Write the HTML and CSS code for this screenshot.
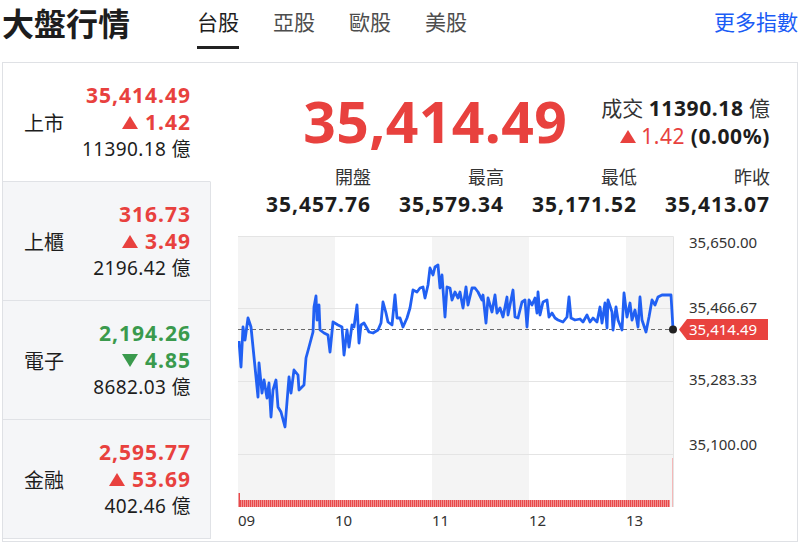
FILE: index.html
```html
<!DOCTYPE html>
<html lang="zh-Hant">
<head>
  <meta charset="UTF-8" />
  <meta name="viewport" content="width=device-width, initial-scale=1" />
  <title>大盤行情</title>
  <link rel="stylesheet" href="styles.css">
</head>
<body>
  <header class="top">
    <h1 class="title">大盤行情</h1>
    <nav class="tabs">
      <a class="tab active" href="#">台股</a>
      <a class="tab" href="#">亞股</a>
      <a class="tab" href="#">歐股</a>
      <a class="tab" href="#">美股</a>
    </nav>
    <a class="more" href="#">更多指數</a>
  </header>

  <section class="card">
    <ul class="markets">
      <li class="market active">
        <span class="name">上市</span>
        <div class="figs">
          <div class="price up">35,414.49</div>
          <div class="chg up"><i class="tri"></i>1.42</div>
          <div class="vol">11390.18 億</div>
        </div>
      </li>
      <li class="market">
        <span class="name">上櫃</span>
        <div class="figs">
          <div class="price up">316.73</div>
          <div class="chg up"><i class="tri"></i>3.49</div>
          <div class="vol">2196.42 億</div>
        </div>
      </li>
      <li class="market">
        <span class="name">電子</span>
        <div class="figs">
          <div class="price down">2,194.26</div>
          <div class="chg down"><i class="tri"></i>4.85</div>
          <div class="vol">8682.03 億</div>
        </div>
      </li>
      <li class="market">
        <span class="name">金融</span>
        <div class="figs">
          <div class="price up">2,595.77</div>
          <div class="chg up"><i class="tri"></i>53.69</div>
          <div class="vol">402.46 億</div>
        </div>
      </li>
    </ul>

    <div class="detail">
      <div class="quote">
        <div class="last up">35,414.49</div>
        <div class="side">
          <div>成交 <b>11390.18</b> 億</div>
          <div><span class="up"><i class="tri"></i>1.42</span> <b>(0.00%)</b></div>
        </div>
      </div>

      <dl class="stats">
        <div class="stat"><dt>開盤</dt><dd>35,457.76</dd></div>
        <div class="stat"><dt>最高</dt><dd>35,579.34</dd></div>
        <div class="stat"><dt>最低</dt><dd>35,171.52</dd></div>
        <div class="stat"><dt>昨收</dt><dd>35,413.07</dd></div>
      </dl>

      <svg class="chart" width="532" height="310" viewBox="238 230 532 310">
        <defs>
          <pattern id="vol" x="0" y="0" width="2" height="10" patternUnits="userSpaceOnUse">
            <rect width="1.2" height="10" fill="#e8494a" />
          </pattern>
        </defs>
        <!-- hour stripes -->
        <g fill="#f4f4f4">
          <rect x="238" y="236" width="97" height="271" />
          <rect x="432" y="236" width="97" height="271" />
          <rect x="626" y="236" width="47" height="271" />
        </g>
        <path d="M238 236.5H673.5V507M238 308.5H673M238 381.5H673M238 454.5H673" stroke="#e4e4e4" fill="none" />
        <!-- volume -->
        <rect x="239" y="500" width="431" height="7" fill="#f2a3a3" />
        <rect x="239" y="500" width="431" height="7" fill="url(#vol)" />
        <rect x="238.5" y="493" width="1.5" height="14" fill="#e8494a" />
        <line x1="672.5" y1="458" x2="672.5" y2="507" stroke="#f4b8b8" />
        <!-- previous close -->
        <line x1="238" y1="329.5" x2="673" y2="329.5" stroke="#6a6a6a" stroke-dasharray="4 3" />
        <polyline class="line" points="239,341 241,367 243,327 245,340 248,318 251,327 254,357 258,397 259,363 262,393 264,380 267,398 269,383 271,417 273,390 276,380 278,407 281,412 285,427 289,377 291,393 294,370 298,375 299,390 304,385 306,358 309,347 313,332 314,307 316,296 317,320 319,305 320,330 324,333 328,335 330,352 333,322 338,325 342,327 344,355 347,330 349,347 352,325 354,327 357,305 359,343 361,325 364,323 369,332 373,333 378,330 381,323 383,302 386,313 388,322 392,325 395,295 397,318 400,318 403,327 407,318 410,308 413,290 417,292 420,288 423,287 425,298 428,285 430,268 433,275 435,267 438,265 440,288 442,275 445,317 447,287 450,288 452,300 455,292 458,298 460,292 463,308 466,287 468,305 472,288 475,288 478,292 482,300 483,295 486,323 488,298 492,312 495,295 497,313 500,308 503,317 507,297 508,315 513,290 515,317 518,318 522,302 525,300 527,327 529,300 532,305 535,298 537,313 538,292 540,315 543,302 547,300 549,317 552,313 555,318 558,320 563,322 567,317 569,297 571,318 575,320 580,319 583,322 587,315 590,322 593,318 597,322 600,307 602,323 605,303 607,328 608,300 612,312 613,330 616,307 618,320 622,330 624,293 627,317 630,303 632,320 635,310 638,327 640,297 642,320 646,332 649,317 652,300 655,305 658,297 662,295 665,295 671,295 673,329" />
        <circle cx="673" cy="329.5" r="4" fill="#222" />
        <path d="M679 329.5L687 319H768V340H687Z" fill="#e9433f" />
        <text class="tag" x="689" y="335">35,414.49</text>
        <g class="axis">
          <text x="689" y="248">35,650.00</text>
          <text x="689" y="313">35,466.67</text>
          <text x="689" y="385">35,283.33</text>
          <text x="689" y="450">35,100.00</text>
          <text x="238" y="526">09</text>
          <text x="335" y="526">10</text>
          <text x="432" y="526">11</text>
          <text x="529" y="526">12</text>
          <text x="626" y="526">13</text>
        </g>
      </svg>
    </div>
  </section>
</body>
</html>
```

FILE: styles.css
```css
:root {
  --up: #e8413e;
  --down: #3a9a4d;
  --blue: #1a5cf5;
  --text: #1d1d1d;
  --border: #e0e2e6;
  --side-bg: #f5f6f8;
}
* {
  box-sizing: border-box;
}
body {
  margin: 0;
  padding: 0 2px;
  background: #fff;
  color: var(--text);
  font-family: "Noto Sans", "Noto Sans CJK TC", sans-serif;
}
.up {
  color: var(--up);
}
.down {
  color: var(--down);
}

/* header */
.top {
  display: flex;
  align-items: flex-start;
  height: 62px;
}
.title {
  margin: 0;
  font-size: 32px;
  font-weight: 700;
  line-height: 48px;
}
.tabs {
  display: flex;
  gap: 34px;
  margin-left: 67px;
}
.tab {
  font-size: 21px;
  line-height: 44px;
  padding-bottom: 2px;
  border-bottom: 3px solid transparent;
  color: #4d4d4d;
  text-decoration: none;
}
.tab.active {
  color: var(--text);
  border-bottom-color: #222;
}
.more {
  margin-left: auto;
  font-size: 21px;
  line-height: 44px;
  color: var(--blue);
  text-decoration: none;
}

/* card */
.card {
  display: flex;
  height: 480px;
  border: 1px solid #dfe1e5;
}
.markets {
  list-style: none;
  margin: 0;
  padding: 0;
  width: 208px;
  flex: none;
}
.market {
  display: flex;
  align-items: center;
  justify-content: space-between;
  height: 119px;
  padding: 0 19px 0 21px;
  background: var(--side-bg);
  border-right: 1px solid var(--border);
  border-bottom: 1px solid var(--border);
}
.market.active {
  background: #fff;
  border-right-color: transparent;
}
.name {
  font-size: 20px;
}
.figs {
  text-align: right;
  line-height: 27px;
}
.price,
.chg {
  font-size: 21px;
  font-weight: 700;
  letter-spacing: 1px;
}
.vol {
  font-size: 19px;
  letter-spacing: 0.4px;
}
.tri {
  display: inline-block;
  width: 0;
  height: 0;
  margin-right: 7px;
  border-left: 8px solid transparent;
  border-right: 8px solid transparent;
  border-bottom: 13px solid currentColor;
  vertical-align: 1px;
}
.down .tri {
  border-bottom: 0;
  border-top: 13px solid currentColor;
}

/* detail */
.detail {
  flex: 1;
  padding: 0 27px;
}
.quote {
  display: flex;
  justify-content: flex-end;
  align-items: center;
  gap: 34px;
  height: 101px;
  padding-top: 16px;
}
.last {
  font-size: 57px;
  font-weight: 700;
  line-height: 1;
  letter-spacing: 0.4px;
}
.side {
  text-align: right;
  font-size: 21px;
  line-height: 28px;
  color: #333;
}
.side b {
  color: var(--text);
  letter-spacing: 0.6px;
}
.side .up {
  letter-spacing: 0.6px;
}
.side .tri {
  margin-right: 5px;
}
.stats {
  display: grid;
  grid-template-columns: repeat(4, 1fr);
  margin: 0;
  text-align: right;
}
.stat dt {
  font-size: 18px;
  line-height: 26px;
  color: #333;
}
.stat dd {
  margin: 0;
  font-size: 21px;
  font-weight: 700;
  line-height: 28px;
  letter-spacing: 1px;
}
.chart {
  display: block;
  margin-top: 12px;
}
.line {
  fill: none;
  stroke: #2160f3;
  stroke-width: 2.8;
  stroke-linejoin: round;
}
.axis text,
.tag {
  font-family: "Noto Sans", sans-serif;
  font-size: 15px;
  fill: #333;
}
.tag {
  fill: #fff;
}
```
